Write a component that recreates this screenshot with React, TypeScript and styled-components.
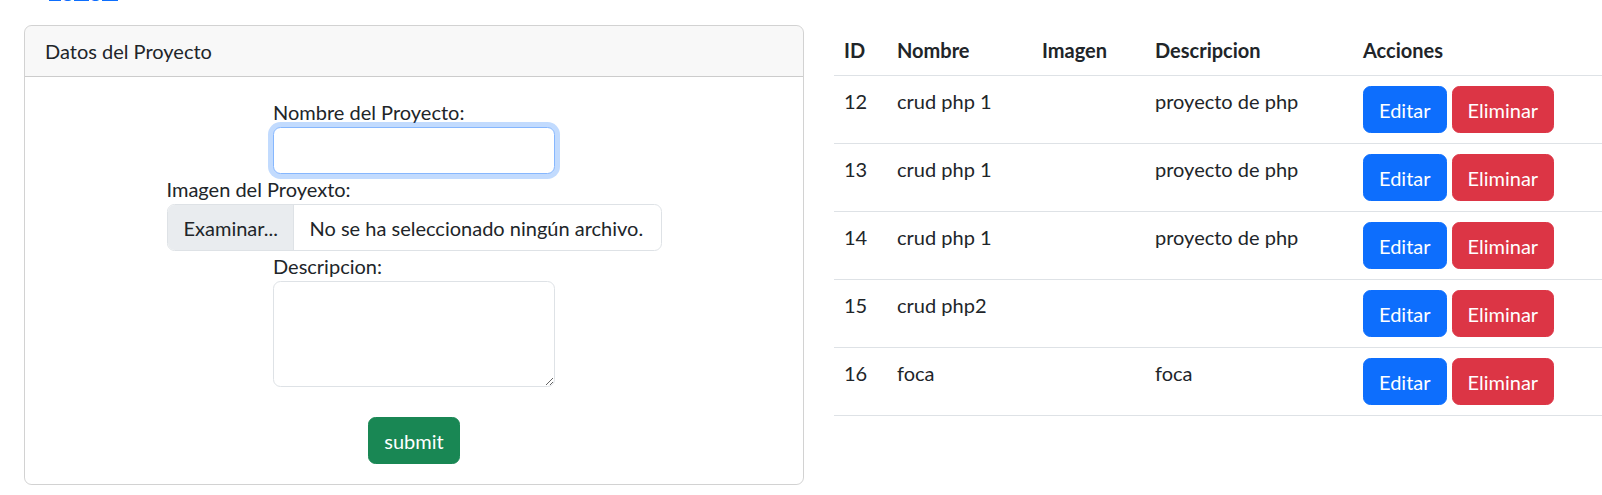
import React from "react";
import styled, { createGlobalStyle } from "styled-components";

const GlobalStyle = createGlobalStyle`
  *, *::before, *::after { box-sizing: border-box; }
  html, body { margin: 0; padding: 0; background: #fff; overflow: hidden; }
  body {
    font-family: Lato, "Liberation Sans", Arial, sans-serif;
    font-size: 20px;
    line-height: 30px;
    color: #212529;
  }
`;

const Page = styled.div`
  padding-left: 24px;
`;

const TopBar = styled.div`
  height: 30px;
  margin-top: -25px;
  margin-bottom: 20px;
  padding-left: 25px;
`;

const TopLink = styled.a`
  color: #0d6efd;
  text-decoration: underline;
`;

const Main = styled.div`
  display: flex;
  align-items: flex-start;
  gap: 30px;
`;

const Card = styled.section`
  width: 780px;
  flex: none;
  border: 1px solid rgba(0, 0, 0, 0.175);
  border-radius: 7.5px;
  overflow: hidden;
`;

const CardHeader = styled.div`
  padding: 10px 20px;
  background: rgba(33, 37, 41, 0.03);
  border-bottom: 1px solid rgba(0, 0, 0, 0.175);
`;

const CardBody = styled.form`
  padding: 20px;
  display: flex;
  flex-direction: column;
  align-items: center;
`;

const Field = styled.div`
  display: flex;
  flex-direction: column;
  align-items: flex-start;
`;

const Label = styled.label`
  display: block;
  height: 30px;
`;

const TextInput = styled.input`
  width: 282px;
  height: 47px;
  margin: 0;
  padding: 7.5px 15px;
  font: inherit;
  color: #212529;
  background: #fff;
  border: 1px solid #86b7fe;
  border-radius: 7.5px;
  box-shadow: 0 0 0 5px rgba(13, 110, 253, 0.25);
  outline: none;
`;

const FileBox = styled.div`
  width: 495px;
  height: 47px;
  display: flex;
  align-items: center;
  border: 1px solid #dee2e6;
  border-radius: 7.5px;
  overflow: hidden;
  background: #fff;
`;

const FileButton = styled.span`
  width: 126px;
  height: 100%;
  flex: none;
  display: flex;
  align-items: center;
  padding-left: 16px;
  background: #e9ecef;
  border-right: 1px solid #dee2e6;
  white-space: nowrap;
`;

const FileName = styled.span`
  padding-left: 16px;
  white-space: nowrap;
`;

const TextArea = styled.textarea`
  display: block;
  width: 282px;
  height: 106px;
  margin: 0;
  padding: 7.5px 15px;
  font: inherit;
  border: 1px solid #dee2e6;
  border-radius: 7.5px;
  resize: vertical;
  outline: none;
`;

type BtnProps = { $variant: "primary" | "danger" | "success" };

const colors = {
  primary: "#0d6efd",
  danger: "#dc3545",
  success: "#198754",
};

const Button = styled.button<BtnProps>`
  height: 47px;
  margin: 0;
  padding: 0 15px;
  font: inherit;
  line-height: 30px;
  color: #fff;
  background: ${(p) => colors[p.$variant]};
  border: 1px solid ${(p) => colors[p.$variant]};
  border-radius: 7.5px;
  cursor: pointer;
`;

const SubmitButton = styled(Button)`
  margin-top: 30px;
`;

const Table = styled.table`
  width: 780px;
  flex: none;
  border-collapse: collapse;
  table-layout: fixed;
`;

const Th = styled.th<{ $w?: number }>`
  ${(p) => (p.$w ? `width: ${p.$w}px;` : "")}
  padding: 10px;
  text-align: left;
  font-weight: 700;
  vertical-align: top;
  border-bottom: 1px solid #dee2e6;
`;

const Td = styled.td`
  padding: 10px;
  vertical-align: top;
  border-bottom: 1px solid #dee2e6;
  white-space: nowrap;
`;

const Actions = styled.div`
  display: flex;
  gap: 5px;
`;

const rows = [
  { id: 12, nombre: "crud php 1", desc: "proyecto de php" },
  { id: 13, nombre: "crud php 1", desc: "proyecto de php" },
  { id: 14, nombre: "crud php 1", desc: "proyecto de php" },
  { id: 15, nombre: "crud php2", desc: "" },
  { id: 16, nombre: "foca", desc: "foca" },
];

export default function App() {
  return (
    <>
      <GlobalStyle />
      <Page>
        <TopBar>
          <TopLink href="#">Agregar</TopLink>
        </TopBar>
        <Main>
          <Card>
            <CardHeader>Datos del Proyecto</CardHeader>
            <CardBody onSubmit={(e) => e.preventDefault()}>
              <Field>
                <Label htmlFor="nombre">Nombre del Proyecto:</Label>
                <TextInput id="nombre" type="text" />
              </Field>
              <Field>
                <Label>Imagen del Proyexto:</Label>
                <FileBox>
                  <FileButton>Examinar...</FileButton>
                  <FileName>No se ha seleccionado ningún archivo.</FileName>
                </FileBox>
              </Field>
              <Field>
                <Label htmlFor="desc">Descripcion:</Label>
                <TextArea id="desc" />
              </Field>
              <SubmitButton $variant="success" type="submit">
                submit
              </SubmitButton>
            </CardBody>
          </Card>
          <Table>
            <thead>
              <tr>
                <Th $w={53}>ID</Th>
                <Th $w={145}>Nombre</Th>
                <Th $w={113}>Imagen</Th>
                <Th $w={208}>Descripcion</Th>
                <Th>Acciones</Th>
              </tr>
            </thead>
            <tbody>
              {rows.map((r) => (
                <tr key={r.id}>
                  <Td>{r.id}</Td>
                  <Td>{r.nombre}</Td>
                  <Td></Td>
                  <Td>{r.desc}</Td>
                  <Td>
                    <Actions>
                      <Button $variant="primary">Editar</Button>
                      <Button $variant="danger">Eliminar</Button>
                    </Actions>
                  </Td>
                </tr>
              ))}
            </tbody>
          </Table>
        </Main>
      </Page>
    </>
  );
}
